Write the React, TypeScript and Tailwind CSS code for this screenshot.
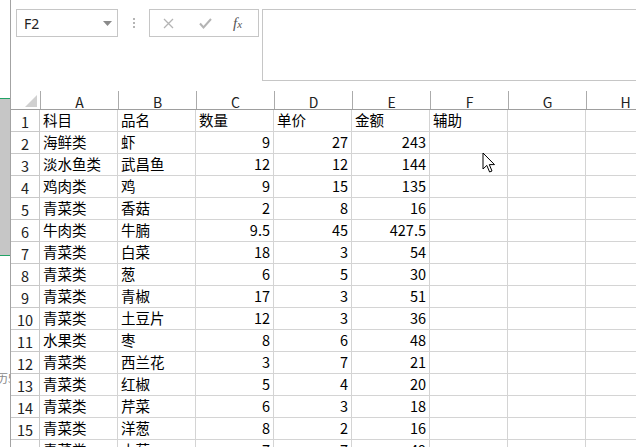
import React from 'react'

const COLS = ['A', 'B', 'C', 'D', 'E', 'F', 'G', 'H']

// 每行: 科目, 品名, 数量, 单价, 金额, 辅助
const ROWS: (string | number)[][] = [
  ['科目', '品名', '数量', '单价', '金额', '辅助'],
  ['海鲜类', '虾', 9, 27, 243],
  ['淡水鱼类', '武昌鱼', 12, 12, 144],
  ['鸡肉类', '鸡', 9, 15, 135],
  ['青菜类', '香菇', 2, 8, 16],
  ['牛肉类', '牛腩', 9.5, 45, 427.5],
  ['青菜类', '白菜', 18, 3, 54],
  ['青菜类', '葱', 6, 5, 30],
  ['青菜类', '青椒', 17, 3, 51],
  ['青菜类', '土豆片', 12, 3, 36],
  ['水果类', '枣', 8, 6, 48],
  ['青菜类', '西兰花', 3, 7, 21],
  ['青菜类', '红椒', 5, 4, 20],
  ['青菜类', '芹菜', 6, 3, 18],
  ['青菜类', '洋葱', 8, 2, 16],
  ['青菜类', '小葱', 7, 7, 49],
]

function Cursor() {
  return (
    <svg className="absolute left-[482px] top-[152px]" width="14" height="23" viewBox="0 0 14 23">
      <path
        d="M1 1 L1 17 L4.8 13.4 L7.6 20 L10 19 L7.3 12.6 L12.5 12.6 Z"
        fill="#fff"
        stroke="#000"
        strokeWidth="1"
        strokeLinejoin="miter"
      />
    </svg>
  )
}

function Toolbar() {
  return (
    <div className="flex h-[91px] shrink-0 items-start pt-[9px] pl-[5px]">
      {/* 名称框 */}
      <div className="flex h-[28px] w-[102px] items-center justify-between border border-[#c6c6c6] pl-[7px] pr-[5px]">
        <span className="font-['Noto_Sans',sans-serif] text-[14px] text-[#222]">F2</span>
        <svg width="9" height="5" viewBox="0 0 9 5">
          <path d="M0 0 L9 0 L4.5 5 Z" fill="#8a8a8a" />
        </svg>
      </div>
      <div className="flex h-[28px] w-[31px] flex-col items-center justify-center gap-[2px]">
        <span className="h-[2px] w-[2px] bg-[#b5b5b5]" />
        <span className="h-[2px] w-[2px] bg-[#b5b5b5]" />
        <span className="h-[2px] w-[2px] bg-[#b5b5b5]" />
      </div>
      {/* 取消 / 确认 / 插入函数 */}
      <div className="flex h-[28px] w-[110px] items-center border border-[#c6c6c6]">
        <svg className="ml-[13px]" width="11" height="11" viewBox="0 0 11 11">
          <path d="M1 1 L10 10 M10 1 L1 10" stroke="#b4b4b4" strokeWidth="1.3" />
        </svg>
        <svg className="ml-[25px]" width="13" height="11" viewBox="0 0 13 11">
          <path d="M1 5.5 L4.5 9.5 L12 1" stroke="#b4b4b4" strokeWidth="2" fill="none" />
        </svg>
        <span className="ml-[21px] font-['Liberation_Serif',serif] text-[15px] italic text-[#555]">
          f<span className="text-[11px]">x</span>
        </span>
      </div>
      {/* 编辑栏 */}
      <div className="ml-[3px] h-[72px] flex-1 border-y border-l border-[#c6c6c6] bg-white" />
    </div>
  )
}

function HeaderRow() {
  return (
    <div className="flex h-[19px] shrink-0 border-b border-[#9e9e9e]">
      <div className="flex w-[29px] shrink-0 items-end justify-end pb-[2px] pr-[3px]">
        <svg width="12" height="12" viewBox="0 0 12 12">
          <path d="M12 0 L12 12 L0 12 Z" fill="#d0d0d0" />
        </svg>
      </div>
      {COLS.map((c) => (
        <div
          key={c}
          className="flex w-[78px] shrink-0 items-center justify-center border-l border-[#ababab] pt-[3px] text-[14px] leading-none text-[#222]"
        >
          {c}
        </div>
      ))}
    </div>
  )
}

function DataRow({ n, cells }: { n: number; cells: (string | number)[] }) {
  return (
    <div className="flex h-[22px] shrink-0">
      <div className="flex w-[29px] shrink-0 items-center justify-center border-b border-r border-[#c8c8c8] pt-[4px] text-[14.5px] leading-none text-[#222]">
        {n}
      </div>
      {COLS.map((c, i) => {
        const v = cells[i]
        const num = typeof v === 'number'
        return (
          <div
            key={c}
            className={
              num
                ? 'flex w-[78px] shrink-0 items-center justify-end border-b border-r border-[#d4d4d4] pr-[3px] text-[14.5px] leading-none text-black'
                : 'flex w-[78px] shrink-0 items-center justify-start border-b border-r border-[#d4d4d4] pl-[3px] text-[14.5px] leading-none text-black'
            }
          >
            {v ?? ''}
          </div>
        )
      })}
    </div>
  )
}

export default function App() {
  return (
    <div className="relative flex h-[447px] w-[636px] overflow-hidden bg-white font-['Noto_Sans_CJK_SC','Noto_Sans',sans-serif]">
      {/* 左侧窗口边缘 */}
      <div className="flex w-[11px] shrink-0 flex-col overflow-hidden border-r border-[#a3a3a3]">
        <div className="h-[98px] shrink-0" />
        <div className="h-px shrink-0 bg-[#21a366]" />
        <div className="h-[156px] shrink-0 bg-[#c6c6c6]" />
        <div className="h-px shrink-0 bg-[#21a366]" />
        <div className="h-[116px] shrink-0" />
        <div className="-ml-[4px] whitespace-nowrap text-[12px] leading-none text-[#8a8a8a]">历5</div>
      </div>

      <div className="flex min-w-0 flex-1 flex-col">
        <Toolbar />
        <HeaderRow />
        {ROWS.map((r, i) => (
          <DataRow key={i} n={i + 1} cells={r} />
        ))}
      </div>

      <Cursor />
    </div>
  )
}
